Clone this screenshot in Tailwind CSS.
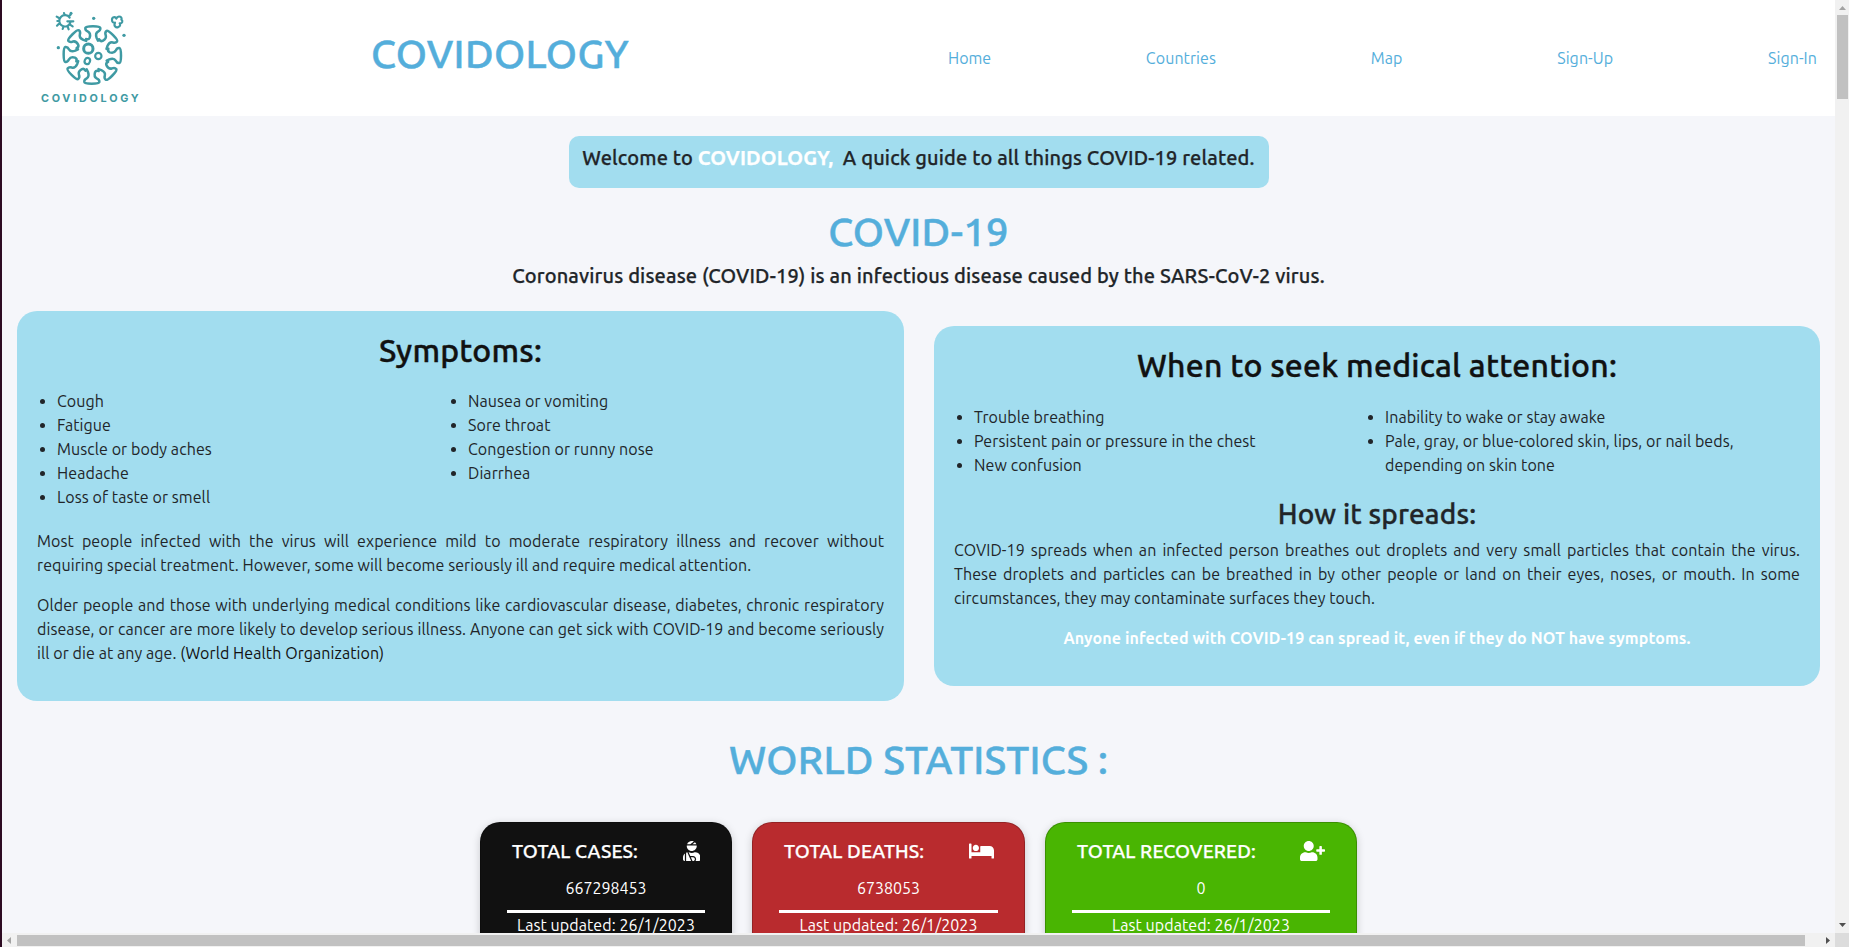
<!DOCTYPE html>
<html lang="en">
<head>
<meta charset="utf-8">
<title>Covidology</title>
<script src="https://cdn.jsdelivr.net/npm/@tailwindcss/browser@4"></script>
</head>
<body class="flex h-[947px] w-[1849px] overflow-hidden bg-[#f5f6fa] font-['Ubuntu','Noto_Sans',sans-serif] text-base leading-6 tracking-[0.08px] text-[#212529]">
  <div class="w-0.5 shrink-0 bg-[#2d0b22]"></div>
  <div class="flex min-w-0 flex-1 flex-col">
    <div class="flex h-[933px] shrink-0">
      <div class="h-[933px] w-[1833px] shrink-0 overflow-hidden">
        <header class="flex h-[116px] items-center bg-white pr-[18px]">
          <div class="ml-9 flex h-full w-[106px] flex-col pt-1.5">
            <svg class="h-[83px] w-[106px] shrink-0" viewBox="0 0 318 249" fill="none" stroke="#3f9aa3" stroke-width="7.5" stroke-linecap="round" stroke-linejoin="round">
              <defs>
                <g id="spike">
                  <path d="M142 66Q143 61 165 61Q186 61 187 66Q188 73 180 77Q171 82 176 96L180 104M142 66Q141 73 150 77Q159 82 155 95Q152 102 144 99"/>
                </g>
              </defs>
              <use href="#spike"/>
              <use href="#spike" transform="rotate(45 163 147)"/>
              <use href="#spike" transform="rotate(90 163 147)"/>
              <use href="#spike" transform="rotate(135 163 147)"/>
              <use href="#spike" transform="rotate(180 163 147)"/>
              <use href="#spike" transform="rotate(225 163 147)"/>
              <use href="#spike" transform="rotate(270 163 147)"/>
              <use href="#spike" transform="rotate(315 163 147)"/>
              <circle cx="151" cy="128" r="14" stroke-width="9"/>
              <circle cx="181" cy="150" r="9.5" stroke-width="6.5"/>
              <ellipse cx="148" cy="165" rx="8" ry="9.5" stroke-width="6.5" transform="rotate(20 148 165)"/>
              <g stroke-width="6.5">
                <path d="M95 35A17 17 0 1 0 97 50M88 46h18M80 27l-2-6M63 36l-7-4M62 54l-5 5M76 63l-2 6M89 62l3 8M96 56l8 5M92 31l6-5M64 45h-6"/>
                <path d="M235 38C232 30 221 33 222 42C222 48 226 51 231 50C226 60 234 67 241 63C248 61 247 54 245 52C254 53 255 44 250 41C254 33 242 28 237 35"/>
              </g>
              <g fill="#3f9aa3" stroke="none">
                <circle cx="167" cy="37" r="5"/><circle cx="99" cy="22" r="4.5"/><circle cx="258" cy="88" r="5"/><circle cx="61" cy="125" r="5"/>
              </g>
            </svg>
            <div class="whitespace-nowrap pl-[3px] pt-px font-['Inter',sans-serif] text-[10.8px] font-bold leading-[17px] tracking-[2.75px] text-[#3f9aa3]">COVIDOLOGY</div>
          </div>
          <h1 class="mb-2 ml-[227px] w-[577px] text-[40px] font-medium leading-[48px] tracking-[0.35px] text-[#54aedb] [-webkit-text-stroke:0.5px]">COVIDOLOGY</h1>
          <nav class="flex flex-1 justify-between text-[#54aedb]">
            <a class="tracking-normal">Home</a>
            <a>Countries</a>
            <a>Map</a>
            <a>Sign-Up</a>
            <a>Sign-In</a>
          </nav>
        </header>
        <main class="flex flex-col items-center">
          <div class="mt-5 flex h-[52px] w-[700px] justify-center whitespace-pre rounded-[10px] bg-[#a2ddef] pt-[10px] text-[20px] font-medium tracking-[0.14px] [-webkit-text-stroke:0.25px]"><span>Welcome to </span><b class="font-bold tracking-[0.14px] text-white">COVIDOLOGY,</b><span>  A quick guide to all things COVID-19 related.</span></div>
          <h1 class="mt-5 text-[40px] font-medium leading-[48px] tracking-[0.2px] text-[#54aedb] [-webkit-text-stroke:0.5px]">COVID-19</h1>
          <p class="mt-2 text-[20px] font-medium tracking-[0.14px] [-webkit-text-stroke:0.25px]">Coronavirus disease (COVID-19) is an infectious disease caused by the SARS-CoV-2 virus.</p>
          <div class="mt-[23px] flex items-center gap-[30px]">
            <section class="h-[390px] w-[887px] rounded-[20px] bg-[#a2ddef] p-5">
              <h2 class="text-center text-[32px] font-medium leading-[38px] tracking-[0.2px] text-[#111] [-webkit-text-stroke:0.4px]">Symptoms:</h2>
              <div class="mt-5 grid grid-cols-[411px_1fr]">
                <ul class="list-disc pl-5">
                  <li>Cough</li><li>Fatigue</li><li>Muscle or body aches</li><li>Headache</li><li>Loss of taste or smell</li>
                </ul>
                <ul class="list-disc pl-5">
                  <li>Nausea or vomiting</li><li>Sore throat</li><li>Congestion or runny nose</li><li>Diarrhea</li>
                </ul>
              </div>
              <p class="mt-5">
                <span class="block whitespace-nowrap [text-align-last:justify]">Most people infected with the virus will experience mild to moderate respiratory illness and recover without</span>
                <span class="block">requiring special treatment. However, some will become seriously ill and require medical attention.</span>
              </p>
              <p class="mt-4">
                <span class="block whitespace-nowrap [text-align-last:justify]">Older people and those with underlying medical conditions like cardiovascular disease, diabetes, chronic respiratory</span>
                <span class="block whitespace-nowrap [text-align-last:justify]">disease, or cancer are more likely to develop serious illness. Anyone can get sick with COVID-19 and become seriously</span>
                <span class="block">ill or die at any age. <span class="text-[#111]">(World Health Organization)</span></span>
              </p>
            </section>
            <section class="h-[360px] w-[886px] rounded-[20px] bg-[#a2ddef] p-5">
              <h2 class="text-center text-[32px] font-medium leading-[38px] tracking-[0.22px] text-[#111] [-webkit-text-stroke:0.4px]">When to seek medical attention:</h2>
              <div class="mt-[21px] grid grid-cols-[411px_1fr]">
                <ul class="list-disc pl-5">
                  <li>Trouble breathing</li><li>Persistent pain or pressure in the chest</li><li>New confusion</li>
                </ul>
                <ul class="list-disc pl-5">
                  <li>Inability to wake or stay awake</li><li>Pale, gray, or blue-colored skin, lips, or nail beds,<br>depending on skin tone</li>
                </ul>
              </div>
              <h3 class="mt-5 text-center text-[28px] font-medium leading-[34px] tracking-[0.13px] [-webkit-text-stroke:0.35px]">How it spreads:</h3>
              <p class="mt-[7px]">
                <span class="block whitespace-nowrap [text-align-last:justify]">COVID-19 spreads when an infected person breathes out droplets and very small particles that contain the virus.</span>
                <span class="block whitespace-nowrap [text-align-last:justify]">These droplets and particles can be breathed in by other people or land on their eyes, noses, or mouth. In some</span>
                <span class="block">circumstances, they may contaminate surfaces they touch.</span>
              </p>
              <p class="mt-4 text-center font-bold tracking-[0.11px] text-white">Anyone infected with COVID-19 can spread it, even if they do NOT have symptoms.</p>
            </section>
          </div>
          <h1 class="mt-[35px] text-[40px] font-medium leading-[48px] tracking-[0.22px] text-[#54aedb] [-webkit-text-stroke:0.5px]">WORLD STATISTICS :</h1>
          <div class="mt-[38px] flex w-[877px] gap-5 text-center text-white">
            <article class="h-[160px] w-[252px] shrink-0 rounded-[20px] border border-black/20 bg-[#111] px-[26px] pt-4 shadow-[0_2px_8px_rgba(0,0,0,0.18)]">
              <div class="flex justify-between px-[5px]">
                <h5 class="text-[19.2px] font-medium tracking-[0.08px] [-webkit-text-stroke:0.25px]">TOTAL CASES:</h5>
                <svg class="mt-[1.5px] h-5 w-[17.5px]" viewBox="0 0 448 512" fill="currentColor"><path d="M277.37 11.98C261.08 4.47 243.11 0 224 0c-53.69 0-99.5 33.13-118.51 80h81.19l90.69-68.02zM342.51 80c-7.9-19.47-20.67-36.2-36.49-49.52L239.99 80h102.52zM224 256c70.69 0 128-57.31 128-128 0-5.48-.95-10.7-1.61-16H97.61c-.67 5.3-1.61 10.52-1.61 16 0 70.69 57.31 128 128 128zM80 299.7V512h128.26l-98.45-221.52A132.835 132.835 0 0 0 80 299.7zM0 464c0 26.51 21.49 48 48 48V320.24C18.88 344.89 0 381.26 0 422.4V464zm256-48h-55.38l42.67 96H256c26.47 0 48-21.53 48-48s-21.53-48-48-48zm57.6-128h-16.71c-22.24 10.18-46.88 16-72.89 16s-50.65-5.82-72.89-16h-7.37l42.67 96H256c44.11 0 80 35.89 80 80 0 18.08-6.26 34.59-16.41 48H400c26.51 0 48-21.49 48-48v-41.6c0-74.23-60.17-134.4-134.4-134.4z"/></svg>
              </div>
              <p class="mt-[13px] tracking-normal">667298453</p>
              <div class="mt-[10px] h-[3px] bg-white"></div>
              <p>Last updated: 26/1/2023</p>
            </article>
            <article class="h-[160px] w-[273px] shrink-0 rounded-[20px] border border-black/20 bg-[#b92b2e] px-[26px] pt-4 shadow-[0_2px_8px_rgba(0,0,0,0.18)]">
              <div class="flex justify-between pl-[5px] pr-1">
                <h5 class="text-[19.2px] font-medium tracking-[0.08px] [-webkit-text-stroke:0.25px]">TOTAL DEATHS:</h5>
                <svg class="mt-[1.5px] h-5 w-[25px]" viewBox="0 0 640 512" fill="currentColor"><path d="M176 256c44.11 0 80-35.89 80-80s-35.89-80-80-80-80 35.89-80 80 35.89 80 80 80zm352-128H304c-8.84 0-16 7.16-16 16v144H64V80c0-8.84-7.16-16-16-16H16C7.16 64 0 71.16 0 80v352c0 8.84 7.16 16 16 16h32c8.84 0 16-7.16 16-16v-48h512v48c0 8.84 7.16 16 16 16h32c8.84 0 16-7.16 16-16V240c0-61.86-50.14-112-112-112z"/></svg>
              </div>
              <p class="mt-[13px] tracking-normal">6738053</p>
              <div class="mt-[10px] h-[3px] bg-white"></div>
              <p>Last updated: 26/1/2023</p>
            </article>
            <article class="h-[160px] w-[312px] shrink-0 rounded-[20px] border border-black/20 bg-[#49b502] px-[26px] pt-4 shadow-[0_2px_8px_rgba(0,0,0,0.18)]">
              <div class="flex justify-between px-[5px]">
                <h5 class="text-[19.2px] font-medium tracking-[0.08px] [-webkit-text-stroke:0.25px]">TOTAL RECOVERED:</h5>
                <svg class="mt-[1.5px] h-5 w-[25px]" viewBox="0 0 640 512" fill="currentColor"><path d="M624 208h-64v-64c0-8.8-7.2-16-16-16h-32c-8.8 0-16 7.2-16 16v64h-64c-8.8 0-16 7.2-16 16v32c0 8.8 7.2 16 16 16h64v64c0 8.8 7.2 16 16 16h32c8.8 0 16-7.2 16-16v-64h64c8.8 0 16-7.2 16-16v-32c0-8.8-7.2-16-16-16zm-400 48c70.7 0 128-57.3 128-128S294.7 0 224 0 96 57.3 96 128s57.3 128 128 128zm89.6 32h-16.7c-22.2 10.2-46.9 16-72.9 16s-50.6-5.8-72.9-16h-16.7C60.2 288 0 348.2 0 422.4V464c0 26.5 21.5 48 48 48h352c26.5 0 48-21.5 48-48v-41.6c0-74.2-60.2-134.4-134.4-134.4z"/></svg>
              </div>
              <p class="mt-[13px]">0</p>
              <div class="mt-[10px] h-[3px] bg-white"></div>
              <p>Last updated: 26/1/2023</p>
            </article>
          </div>
        </main>
      </div>
      <div class="flex w-3.5 shrink-0 flex-col items-center bg-[#f1f1f1]">
        <svg class="mt-1.5 h-1 w-[7px] shrink-0" viewBox="0 0 7 4"><path d="M0 4L3.5 0L7 4z" fill="#a3a3a3"/></svg>
        <div class="mt-[5px] h-[84px] w-[11px] shrink-0 bg-[#c1c1c1]"></div>
        <svg class="mb-1.5 mt-auto h-1 w-[7px] shrink-0" viewBox="0 0 7 4"><path d="M0 0L3.5 4L7 0z" fill="#505050"/></svg>
      </div>
    </div>
    <div class="flex h-3.5 shrink-0 items-center bg-[#f1f1f1]">
      <svg class="ml-[5px] h-[7px] w-1 shrink-0" viewBox="0 0 4 7"><path d="M4 0L0 3.5L4 7z" fill="#a3a3a3"/></svg>
      <div class="ml-1.5 h-[11px] w-[1788px] shrink-0 bg-[#c1c1c1]"></div>
      <svg class="ml-[21px] h-[7px] w-1 shrink-0" viewBox="0 0 4 7"><path d="M0 0L4 3.5L0 7z" fill="#505050"/></svg>
      <div class="ml-auto h-full w-3.5 shrink-0 bg-[#dcdcdc]"></div>
    </div>
  </div>
</body>
</html>
